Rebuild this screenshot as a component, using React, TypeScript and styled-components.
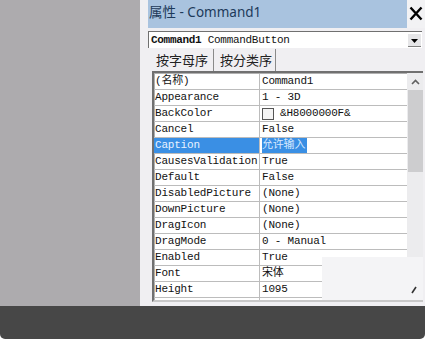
import React from "react";
import styled, { createGlobalStyle } from "styled-components";

const GlobalStyle = createGlobalStyle`
	html, body {
		margin: 0;
		padding: 0;
		background: #ffffff;
	}
`;

type Prop = { name: string; value: string; selected?: boolean };

const props: Prop[] = [
	{ name: "(名称)", value: "Command1" },
	{ name: "Appearance", value: "1 - 3D" },
	{ name: "BackColor", value: "swatch" },
	{ name: "Cancel", value: "False" },
	{ name: "Caption", value: "允许输入", selected: true },
	{ name: "CausesValidation", value: "True" },
	{ name: "Default", value: "False" },
	{ name: "DisabledPicture", value: "(None)" },
	{ name: "DownPicture", value: "(None)" },
	{ name: "DragIcon", value: "(None)" },
	{ name: "DragMode", value: "0 - Manual" },
	{ name: "Enabled", value: "True" },
	{ name: "Font", value: "宋体" },
	{ name: "Height", value: "1095" },
	{ name: "", value: "" },
];

const App = (): JSX.Element => {
	return (
		<>
			<GlobalStyle />
			<Screen>
				<TopArea>
					<LeftGray />
					<Panel>
						<TitleRow>
							<TitleBar>属性 - Command1</TitleBar>
							<CloseBox>
								<svg width="14" height="15" viewBox="0 0 14 15">
									<path d="M1.5 1.5 L12.5 13.5 M12.5 1.5 L1.5 13.5" stroke="#000" strokeWidth="2.4" />
								</svg>
							</CloseBox>
						</TitleRow>
						<Combo>
							<ComboText>
								<b>Command1</b> CommandButton
							</ComboText>
							<DropButton>
								<svg width="7" height="4" viewBox="0 0 7 4">
									<path d="M0 0 H7 L3.5 4 Z" fill="#000" />
								</svg>
							</DropButton>
						</Combo>
						<Tabs>
							<Tab active>按字母序</Tab>
							<Tab>按分类序</Tab>
						</Tabs>
						<GridFrame>
							<Rows>
								{props.map((p, i) => (
									<Row key={i}>
										<NameCell selected={p.selected}>{p.name}</NameCell>
										<ValueCell>
											{p.value === "swatch" ? (
												<>
													<Swatch />
													&amp;H8000000F&amp;
												</>
											) : p.selected ? (
												<Highlight>{p.value}</Highlight>
											) : (
												p.value
											)}
										</ValueCell>
									</Row>
								))}
							</Rows>
							<Scrollbar>
								<ArrowUp>
									<svg width="9" height="6" viewBox="0 0 9 6">
										<path d="M1 5 L4.5 1.5 L8 5" stroke="#606060" strokeWidth="1.6" fill="none" />
									</svg>
								</ArrowUp>
								<Thumb />
							</Scrollbar>
							<Cover>
								<svg width="6" height="8" viewBox="0 0 6 8">
									<path d="M5 1 L1 7" stroke="#333" strokeWidth="1.6" />
								</svg>
							</Cover>
						</GridFrame>
					</Panel>
				</TopArea>
				<BottomBar />
			</Screen>
		</>
	);
};

const Screen = styled.div`
	width: 425px;
	height: 339px;
	display: flex;
	flex-direction: column;
	overflow: hidden;
`;

const TopArea = styled.div`
	height: 306px;
	display: flex;
	flex-direction: row;
`;

const LeftGray = styled.div`
	width: 140px;
	background: #adabae;
`;

const Panel = styled.div`
	flex: 1;
	background: #f0eff2;
	padding-left: 8px;
	display: flex;
	flex-direction: column;
`;

const TitleRow = styled.div`
	height: 28px;
	display: flex;
	flex-direction: row;
`;

const TitleBar = styled.div`
	flex: 1;
	background: #a9c3df;
	color: #1d3a5a;
	font-family: "Noto Sans", "Noto Sans CJK SC", sans-serif;
	font-size: 13.5px;
	line-height: 25px;
	padding-left: 1px;
`;

const CloseBox = styled.div`
	width: 18px;
	background: #f2f2f4;
	display: flex;
	align-items: center;
	justify-content: center;
	padding-bottom: 2px;
	box-sizing: border-box;
`;

const Combo = styled.div`
	margin: 3px 3px 0 0;
	height: 16px;
	background: #fff;
	border-top: 1px solid #707070;
	border-left: 1px solid #707070;
	display: flex;
	align-items: center;
`;

const ComboText = styled.div`
	flex: 1;
	padding-left: 2px;
	font-family: "Liberation Mono", monospace;
	font-size: 11px;
	letter-spacing: -0.3px;
	color: #111;
	white-space: nowrap;
	b {
		font-weight: bold;
	}
`;

const DropButton = styled.div`
	width: 13px;
	height: 13px;
	margin-right: 1px;
	background: #e6e6e8;
	border-bottom: 1px solid #808080;
	display: flex;
	align-items: flex-end;
	justify-content: center;
	padding-bottom: 3px;
	box-sizing: border-box;
`;

const Tabs = styled.div`
	height: 22px;
	margin-top: 1px;
	padding-left: 4px;
	display: flex;
	flex-direction: row;
	align-items: stretch;
`;

const Tab = styled.div<{ active?: boolean }>`
	padding: 0 ${(p) => (p.active ? "5px" : "3px")} 0 4px;
	font-family: "Noto Sans CJK SC", sans-serif;
	font-size: 13px;
	line-height: 21px;
	color: #222;
	border-right: 1px solid #8a8a8a;
	margin-right: 2px;
`;

const GridFrame = styled.div`
	position: relative;
	margin: 0 2px 0 4px;
	height: 227px;
	border-top: 2px solid #707070;
	border-left: 2px solid #707070;
	border-bottom: 2px solid #c8c8c8;
	box-shadow: inset 1px 1px 0 #b0b0b0;
	background: #fff;
	display: flex;
	flex-direction: row;
	overflow: hidden;
`;

const Rows = styled.div`
	flex: 1;
	padding-top: 1px;
`;

const Row = styled.div`
	height: 15px;
	display: grid;
	grid-template-columns: 106px 1fr;
	border-bottom: 1px solid #bcbcbc;
	font-family: "Liberation Mono", "Noto Sans CJK SC", monospace;
	font-size: 11px;
	letter-spacing: -0.2px;
	color: #111;
	line-height: 15px;
`;

const NameCell = styled.div<{ selected?: boolean }>`
	padding-left: 1px;
	border-right: 1px solid #bcbcbc;
	background: ${(p) => (p.selected ? "#3a8fe4" : "transparent")};
	color: ${(p) => (p.selected ? "#e8f2ff" : "#111")};
	white-space: nowrap;
	overflow: hidden;
`;

const ValueCell = styled.div`
	padding-left: 2px;
	display: flex;
	align-items: center;
	white-space: nowrap;
	overflow: hidden;
`;

const Highlight = styled.span`
	background: #3a8fe4;
	color: #d6e9ff;
	padding-right: 2px;
`;

const Swatch = styled.span`
	display: inline-block;
	width: 10px;
	height: 10px;
	border: 1px solid #555;
	background: #f4f4f4;
	margin-right: 6px;
`;

const Scrollbar = styled.div`
	width: 16px;
	background: #ececee;
	display: flex;
	flex-direction: column;
	align-items: center;
`;

const ArrowUp = styled.div`
	height: 17px;
	display: flex;
	align-items: center;
	justify-content: center;
`;

const Thumb = styled.div`
	width: 15px;
	height: 82px;
	background: #cdcdcf;
`;

const Cover = styled.div`
	position: absolute;
	left: 168px;
	right: 0;
	top: 184px;
	bottom: 0;
	background: #f4f4f6;
	display: flex;
	align-items: flex-end;
	justify-content: flex-end;
	padding: 0 6px 6px 0;
`;

const BottomBar = styled.div`
	flex: 1;
	background: #474747;
	border-radius: 0 0 5px 5px;
`;

export default App;
